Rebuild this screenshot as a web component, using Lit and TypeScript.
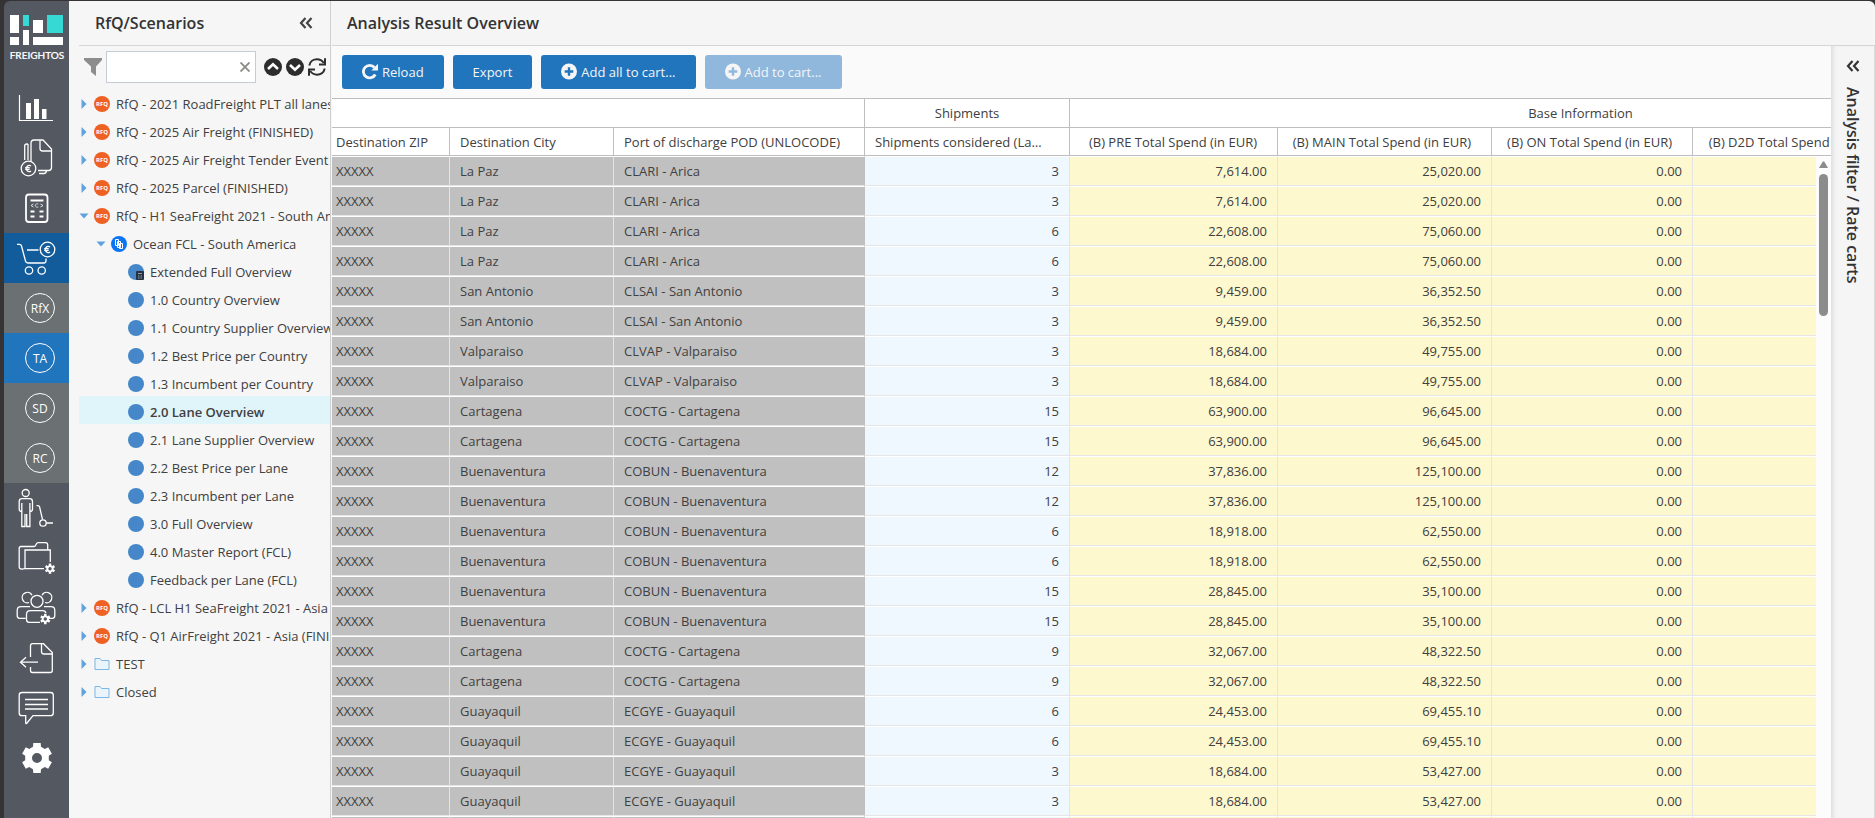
import { LitElement, html, svg, css } from "lit";
import { customElement, property } from "lit/decorators.js";
import { classMap } from "lit/directives/class-map.js";

type NodeKind = "rfq" | "scenario" | "report" | "extended" | "folder";

interface TreeNode {
  label: string;
  kind: NodeKind;
  level: number;
  open?: boolean;
  selected?: boolean;
}

interface Row {
  city: string;
  port: string;
  shipments: number;
  pre: string;
  main: string;
}

const nodes: TreeNode[] = [
  { label: "RfQ - 2021 RoadFreight PLT all lanes", kind: "rfq", level: 0 },
  { label: "RfQ - 2025 Air Freight (FINISHED)", kind: "rfq", level: 0 },
  { label: "RfQ - 2025 Air Freight Tender Event", kind: "rfq", level: 0 },
  { label: "RfQ - 2025 Parcel (FINISHED)", kind: "rfq", level: 0 },
  { label: "RfQ - H1 SeaFreight 2021 - South America", kind: "rfq", level: 0, open: true },
  { label: "Ocean FCL - South America", kind: "scenario", level: 1, open: true },
  { label: "Extended Full Overview", kind: "extended", level: 2 },
  { label: "1.0 Country Overview", kind: "report", level: 2 },
  { label: "1.1 Country Supplier Overview", kind: "report", level: 2 },
  { label: "1.2 Best Price per Country", kind: "report", level: 2 },
  { label: "1.3 Incumbent per Country", kind: "report", level: 2 },
  { label: "2.0 Lane Overview", kind: "report", level: 2, selected: true },
  { label: "2.1 Lane Supplier Overview", kind: "report", level: 2 },
  { label: "2.2 Best Price per Lane", kind: "report", level: 2 },
  { label: "2.3 Incumbent per Lane", kind: "report", level: 2 },
  { label: "3.0 Full Overview", kind: "report", level: 2 },
  { label: "4.0 Master Report (FCL)", kind: "report", level: 2 },
  { label: "Feedback per Lane (FCL)", kind: "report", level: 2 },
  { label: "RfQ - LCL H1 SeaFreight 2021 - Asia", kind: "rfq", level: 0 },
  { label: "RfQ - Q1 AirFreight 2021 - Asia (FINISHED)", kind: "rfq", level: 0 },
  { label: "TEST", kind: "folder", level: 0 },
  { label: "Closed", kind: "folder", level: 0 },
];

// Every lane is quoted by two suppliers, so each entry fills two rows.
const lanes: Row[] = [
  { city: "La Paz", port: "CLARI - Arica", shipments: 3, pre: "7,614.00", main: "25,020.00" },
  { city: "La Paz", port: "CLARI - Arica", shipments: 6, pre: "22,608.00", main: "75,060.00" },
  { city: "San Antonio", port: "CLSAI - San Antonio", shipments: 3, pre: "9,459.00", main: "36,352.50" },
  { city: "Valparaiso", port: "CLVAP - Valparaiso", shipments: 3, pre: "18,684.00", main: "49,755.00" },
  { city: "Cartagena", port: "COCTG - Cartagena", shipments: 15, pre: "63,900.00", main: "96,645.00" },
  { city: "Buenaventura", port: "COBUN - Buenaventura", shipments: 12, pre: "37,836.00", main: "125,100.00" },
  { city: "Buenaventura", port: "COBUN - Buenaventura", shipments: 6, pre: "18,918.00", main: "62,550.00" },
  { city: "Buenaventura", port: "COBUN - Buenaventura", shipments: 15, pre: "28,845.00", main: "35,100.00" },
  { city: "Cartagena", port: "COCTG - Cartagena", shipments: 9, pre: "32,067.00", main: "48,322.50" },
  { city: "Guayaquil", port: "ECGYE - Guayaquil", shipments: 6, pre: "24,453.00", main: "69,455.10" },
  { city: "Guayaquil", port: "ECGYE - Guayaquil", shipments: 3, pre: "18,684.00", main: "53,427.00" },
  { city: "Guayaquil", port: "ECGYE - Guayaquil", shipments: 3, pre: "18,684.00", main: "53,427.00" },
];
const rows: Row[] = lanes.flatMap((lane) => [lane, lane]);

/** Six-toothed cog outline centred on (cx, cy). */
function cog(cx: number, cy: number, outer: number, inner: number, hole: number) {
  const pts: string[] = [];
  for (let i = 0; i < 6; i++) {
    const a = (i * Math.PI) / 3 - Math.PI / 2;
    for (const [d, r] of [[-0.34, inner], [-0.24, outer], [0.24, outer], [0.34, inner]]) {
      pts.push(`${(cx + r * Math.cos(a + d)).toFixed(2)} ${(cy + r * Math.sin(a + d)).toFixed(2)}`);
    }
  }
  return `M${pts.join("L")}ZM${cx - hole} ${cy}a${hole} ${hole} 0 1 0 ${2 * hole} 0a${hole} ${hole} 0 1 0 ${-2 * hole} 0Z`;
}

const euro = (x: number, y: number) =>
  svg`<path stroke-width="1.300" d="M${x + 2.5} ${y - 2.4}a2.900 3 0 1 0 0 4.800M${x - 3.3} ${y - 0.8}h4.500M${x - 3.3} ${y + 0.8}h4.500"/>`;

const railIcons = {
  chart: svg`<path stroke-width="1.2" d="M15.5 12V37.5H49"/><path class="solid" d="M22 20h5v16h-5zM30 16h5v20h-5zM38 26h4.500v10h-4.500z"/>`,
  costs: svg`<path d="M27 28V10.500Q27 7 30 7H39L47.500 16V34.500Q47.500 37.500 44.500 37.500H34M36 7V15.500Q36 18 38.500 18H47.500M24 27V11M20.700 27V13Q20.700 11 23 11H24M35 40.500H40Q42 40.500 42.500 38"/><circle cx="24.500" cy="35.500" r="7.300"/>${euro(24.5, 35.5)}`,
  calc: svg`<rect x="22" y="11.500" width="21.500" height="27.500" rx="3" stroke-width="1.800"/><path stroke-width="1.800" d="M26.500 17.500H39.500M26.500 28.500h4M35.500 28.500h4M26.500 33.500h4M35.500 33.500h4"/><path stroke-width=".8" d="M29.500 21l-2.500 1.500 2.500 1.500M36.500 21l2.500 1.500-2.500 1.500M34.300 21a2 1.700 0 1 0 0 3"/>`,
  cart: svg`<path d="M13 11.300H15.500Q17 11.300 17.500 13L21.500 28Q22 30 24 30H40Q42 30 42 27.500V25.500M23 17H34.500"/><circle cx="25" cy="37.500" r="3.700"/><circle cx="37.700" cy="37.500" r="3.700"/><circle cx="43.500" cy="16.500" r="7.300"/>${euro(43.5, 16.5)}`,
  worker: svg`<circle cx="21.700" cy="10" r="3.500"/><path d="M17.800 28.500Q15.200 28.500 15.200 26V18.500Q15.200 15.700 18 15.700H25.500Q28.500 15.700 28.500 18.500V26Q28.500 28.500 25.900 28.500M17.800 20V43.500H21V31M25.900 20V43.500H22.700V31M32.500 22.700H34Q35.300 22.700 35.600 24L38.500 36.500M42.500 40H49"/><circle cx="39" cy="40" r="3.200"/>`,
  folder: svg`<path d="M21 35.700Q15.200 37 15.200 34V15.500Q15.200 13.500 17 13.500H30Q31.500 13.500 32 11.700T34 9.700H41.500Q43.700 9.700 43.700 12V16.500M40 35.700H21V17H46.300V29"/><path class="solid" fill-rule="evenodd" d="${cog(46, 35.700, 5.300, 3.700, 1.700)}"/>`,
  people: svg`<path d="M25 19.500A5.200 5.200 0 1 1 28 12.200M41 19.500A5.200 5.200 0 1 0 38 12.200M21.500 35.300H15.500Q13.200 35.300 13.200 32.500V27.500Q13.200 23.700 17 23.700H26M44.500 35.300H48.500Q50.800 35.300 50.800 32.500V27.500Q50.800 23.700 47 23.700H40M36 39.300H25Q22.500 39.300 22.500 36.500V31.500Q22.500 27.700 26.500 27.700H38.500Q41.500 27.700 41.800 30"/><circle cx="33" cy="18.300" r="6"/><path class="solid" fill-rule="evenodd" d="${cog(41.300, 36, 5.300, 3.700, 1.700)}"/>`,
  leave: svg`<path d="M26.500 24V13Q26.500 10.700 28.500 10.700H39.500L48.300 19.500V37.500Q48.300 39.500 46.300 39.500H28.500Q26.500 39.500 26.500 37.500V34M37.500 11V18.500Q37.500 21 40 21H48M34 29.200H16.500M22 24.200L16.500 29.200L22 34.200"/>`,
  chat: svg`<path d="M18 9.500H46.500Q49.300 9.500 49.300 12.300V29.900Q49.300 32.700 46.500 32.700H29L23 40Q21.700 41.500 21.700 39.500V32.700H18Q15.200 32.700 15.200 29.900V12.300Q15.200 9.500 18 9.500ZM21 16.500H44M21 21.500H44M21 26H44"/>`,
  gear: svg`<path class="solid" fill-rule="evenodd" d="${cog(33, 25, 15.500, 12, 5)}"/>`,
};

const chevrons = html`<svg width="14" height="12" viewBox="0 0 14 12" fill="none" stroke="currentColor" stroke-width="2.200" aria-hidden="true">
  <path d="M6.500 1L2 6l4.500 5M12.500 1L8 6l4.500 5" /></svg>`;

const plus = html`<svg width="16" height="17" viewBox="0 0 16 17" aria-hidden="true">
  <path fill="currentColor" fill-rule="evenodd" d="M8 .5a8 8 0 1 0 0 16a8 8 0 1 0 0-16ZM6.800 4.200h2.400v3.100h3.100v2.400H9.200v3.100H6.800V9.700H3.700V7.300h3.100Z" /></svg>`;

@customElement("nav-rail")
export class NavRail extends LitElement {
  static styles = css`
    :host { display: block; flex: none; width: 65px; background: #545860; border-top-left-radius: 6px; overflow: hidden; }
    .logo { display: block; height: 82px; }
    .logo text { font: 500 10px "Lato", sans-serif; fill: #fff; stroke: #fff; stroke-width: .2px; }
    nav { display: flex; flex-direction: column; }
    button { display: block; width: 100%; height: 50px; padding: 0; border: 0; background: none; color: #fff; cursor: pointer; }
    .active { background: #135c9c; }
    .sub { background: #6b7072; }
    .current { background: #2175bd; }
    svg { display: block; }
    .icon { fill: none; stroke: #fff; stroke-width: 1.3px; }
    .icon .solid { fill: #fff; stroke-width: 0; }
    .badge { display: flex; align-items: center; justify-content: center; box-sizing: border-box; width: 30px; height: 30px;
      margin-left: 21px; border: 1px solid #fff; border-radius: 50%; font: 12px "Open Sans", sans-serif; }
  `;

  private item(label: string, icon: unknown, active = false) {
    return html`<button class=${classMap({ active })} aria-label=${label}>
      <svg class="icon" width="65" height="50" viewBox="0 0 65 50" aria-hidden="true">${icon}</svg>
    </button>`;
  }

  private sub(text: string, current = false) {
    return html`<button class=${classMap({ sub: !current, current })}><span class="badge">${text}</span></button>`;
  }

  render() {
    return html`
      <svg class="logo" width="65" height="82" viewBox="0 0 65 82">
        <path fill="#fff" d="M6 14h9v18H6zM29 19h10v13H29zM6 36h9v8H6zM19 29h6v15h-6zM29 36h30v8H29z" />
        <path fill="#37d9d5" d="M19 14h6v11h-6zM43 14h16v18H43z" />
        <text x="33" y="58" text-anchor="middle">FREIGHTOS</text>
      </svg>
      <nav>
        ${this.item("Dashboard", railIcons.chart)} ${this.item("Costs", railIcons.costs)} ${this.item("Calculator", railIcons.calc)}
        ${this.item("Procurement", railIcons.cart, true)}
        ${this.sub("RfX")} ${this.sub("TA", true)} ${this.sub("SD")} ${this.sub("RC")}
        ${this.item("Handling", railIcons.worker)} ${this.item("Files", railIcons.folder)} ${this.item("Users", railIcons.people)}
        ${this.item("Leave", railIcons.leave)} ${this.item("Messages", railIcons.chat)} ${this.item("Settings", railIcons.gear)}
      </nav>`;
  }
}

@customElement("scenario-tree")
export class ScenarioTree extends LitElement {
  @property({ attribute: false }) nodes: TreeNode[] = [];

  static styles = css`
    :host { display: block; flex: none; box-sizing: border-box; width: 262px; padding-left: 10px; background: #f6f6f6;
      border-right: 1px solid #d0d0d0; overflow: hidden; color: #404040; font: 13px/24px "Open Sans", sans-serif; }
    button { display: flex; padding: 0; border: 0; background: none; color: #444; cursor: pointer; }
    svg { display: block; flex: none; }
    header { display: flex; align-items: center; justify-content: space-between; height: 44px; padding: 0 17px 0 16px; border-bottom: 1px solid #d5d5d5; }
    h2 { margin: 0; font-size: 16px; font-weight: 600; color: #333; }
    .filter { display: flex; align-items: center; height: 32px; padding: 5px 4px 5px 5px; }
    .field { display: flex; align-items: center; box-sizing: border-box; width: 150px; height: 32px; margin: 0 8px 0 4px; padding-right: 5px;
      border: 1px solid #c5ccd3; background: #fff; }
    input { flex: 1; min-width: 0; height: 28px; padding: 0 6px; border: 0; outline: 0; background: none; font: inherit; }
    .tools { display: flex; gap: 4px; }
    ul { margin: 0; padding: 0; list-style: none; }
    li { box-sizing: border-box; display: flex; align-items: center; height: 28px; padding-top: 4px; white-space: nowrap; }
    .l1 { padding-left: 17px; }
    .l2 { padding-left: 34px; }
    .arrow { width: 15px; }
    .selected { background: #e0f5f9; font-weight: 600; }
    .label { margin-left: 6px; }
    .rfq text { font: 700 6px "Open Sans", sans-serif; fill: #fff; }
  `;

  private icon(kind: NodeKind) {
    switch (kind) {
      case "rfq":
        return svg`<circle cx="8" cy="8" r="8" fill="#ee6123"/><text x="8" y="10.200" text-anchor="middle">RFQ</text>`;
      case "scenario":
        return svg`<circle cx="8" cy="8" r="8" fill="#0a74f5"/><path fill="#0a74f5" stroke="#fff" d="M4.500 3.500h3v6h-3zM6.500 5.500h3v6h-3zM8.500 7.500h3v5h-3z"/>`;
      case "folder":
        return svg`<path fill="#eaf4fc" stroke="#7db7e4" d="M1 13.500v-11h5l1.500 2H15v9Z"/>`;
      case "extended":
        return svg`<circle cx="8" cy="8" r="8" fill="#4587c8"/><rect x="8" y="7" width="8" height="9" rx="1" fill="#263242"/><path stroke="#8fa3b8" d="M10 9.500h4M10 12h1.500M12.500 12H14M10 14h1.500M12.500 14H14"/>`;
      default:
        return svg`<circle cx="8" cy="8" r="8" fill="#4587c8"/>`;
    }
  }

  render() {
    return html`
      <header><h2>RfQ/Scenarios</h2><button aria-label="Collapse panel">${chevrons}</button></header>
      <div class="filter">
        <svg width="18" height="20" viewBox="0 0 18 20" aria-hidden="true"><path fill="#8d8d8d" d="M0 1h18v2l-6 6.500V19l-5-4V9.500L0 3Z" /></svg>
        <span class="field">
          <input type="text" aria-label="Filter scenarios" />
          <button aria-label="Clear filter"><svg width="10" height="10" viewBox="0 0 10 10" stroke="#8b8b84" stroke-width="1.800"><path d="M.5 .5l9 9M9.500 .5l-9 9" /></svg></button>
        </span>
        <span class="tools">
          <button aria-label="Collapse all"><svg width="18" height="18" viewBox="0 0 18 18"><circle cx="9" cy="9" r="9" fill="#2d2d2d" /><path fill="none" stroke="#fff" stroke-width="2.600" d="M4 11l5-4.800L14 11" /></svg></button>
          <button aria-label="Expand all"><svg width="18" height="18" viewBox="0 0 18 18"><circle cx="9" cy="9" r="9" fill="#2d2d2d" /><path fill="none" stroke="#fff" stroke-width="2.600" d="M4 7l5 4.800L14 7" /></svg></button>
          <button aria-label="Refresh"><svg width="18" height="18" viewBox="0 0 18 18"><path fill="none" stroke="#2d2d2d" stroke-width="2" d="M1.300 7.500C2 3.500 5.500 1.300 9 1.300c3 0 5 1.200 6.800 3.700M16.700 10.500c-.7 4-4.200 6.200-7.700 6.200-3 0-5-1.200-6.800-3.700" /><path fill="none" stroke="#2d2d2d" stroke-width="2" d="M17 .3V6.500H11M1 17.700V11.500H7" /></svg></button>
        </span>
      </div>
      <ul role="tree" aria-label="Scenarios">
        ${this.nodes.map(
          (n) => html`<li role="treeitem" class=${classMap({ ["l" + n.level]: true, selected: !!n.selected })} aria-selected=${n.selected ? "true" : "false"}>
            <svg class="arrow" width="15" height="10" viewBox="0 0 15 10" fill="#5ea3e0" aria-hidden="true">
              ${n.level === 2 ? "" : n.open ? svg`<path d="M.500 2.500h9L5 7.500Z"/>` : svg`<path d="M2.500 0v10L7.500 5Z"/>`}
            </svg>
            <svg class=${n.kind} width="16" height="16" viewBox="0 0 16 16" aria-hidden="true">${this.icon(n.kind)}</svg>
            <span class="label">${n.label}</span>
          </li>`,
        )}
      </ul>`;
  }
}

@customElement("result-grid")
export class ResultGrid extends LitElement {
  @property({ attribute: false }) rows: Row[] = [];

  static styles = css`
    :host { display: block; flex: 1; min-width: 0; min-height: 0; position: relative; overflow: hidden; background: #fff; color: #404040; font: 13px/18px "Open Sans", sans-serif; }
    table { width: 1760px; table-layout: fixed; border-collapse: separate; border-spacing: 0; }
    .zip { width: 118px; } .city { width: 164px; } .port { width: 251px; } .ship { width: 205px; }
    .pre { width: 208px; } .main { width: 214px; } .on { width: 201px; } .door { width: 208px; } .rest { width: 191px; }
    th, td { box-sizing: border-box; padding: 0 10px; white-space: nowrap; overflow: hidden; text-overflow: ellipsis; }
    th { height: 28px; border-right: 1px solid #bebebe; border-bottom: 1px solid #bebebe; font-weight: 400; text-align: left; }
    .groups th { border-top: 1px solid #bebebe; text-align: center; height: 30px; }
    .considered { padding-right: 24px; }
    .spend { padding-right: 20px; padding-left: 4px; text-align: right; text-overflow: clip; }
    td { height: 30px; border-top: 1px solid #fff; border-bottom: 1px solid #e6e6e6; border-right: 1px solid #e4e4e4; }
    .key { background: #c0c0c0; background-clip: padding-box; }
    .key:nth-child(3) { border-right-color: #c0c0c0; }
    th:first-child, td:first-child { padding-left: 4px; }
    .count { background: #eff7ff; background-clip: padding-box; }
    .money { background: #fef8cf; background-clip: padding-box; }
    .count, .money { text-align: right; }
    .scroll { position: absolute; top: 59px; right: 0; bottom: 0; width: 15px; background: #fcfcfc; display: flex; flex-direction: column; align-items: center; gap: 6px; padding-top: 4px; box-sizing: border-box; }
    .up { width: 9px; height: 7px; }
    .thumb { width: 9px; height: 142px; border-radius: 5px; background: #8c8c8c; }
  `;

  render() {
    return html`
      <table>
        <colgroup>
          <col class="zip" /><col class="city" /><col class="port" /><col class="ship" /><col class="pre" /><col class="main" /><col class="on" /><col class="door" /><col class="rest" />
        </colgroup>
        <thead>
          <tr class="groups"><th colspan="3"></th><th>Shipments</th><th colspan="5">Base Information</th></tr>
          <tr>
            <th>Destination ZIP</th><th>Destination City</th><th>Port of discharge POD (UNLOCODE)</th><th class="considered">Shipments considered (Lane)</th>
            <th class="spend">(B) PRE Total Spend (in EUR)</th><th class="spend">(B) MAIN Total Spend (in EUR)</th>
            <th class="spend">(B) ON Total Spend (in EUR)</th><th class="spend">(B) D2D Total Spend (in EUR)</th><th></th>
          </tr>
        </thead>
        <tbody>
          ${this.rows.map(
            (r) => html`<tr>
              <td class="key">XXXXX</td><td class="key">${r.city}</td><td class="key">${r.port}</td>
              <td class="count">${r.shipments}</td><td class="money">${r.pre}</td><td class="money">${r.main}</td>
              <td class="money">0.00</td><td class="money"></td><td class="money"></td>
            </tr>`,
          )}
        </tbody>
      </table>
      <div class="scroll" aria-hidden="true">
        <svg class="up" viewBox="0 0 9 7"><path fill="#8c8c8c" d="M3.800 .5h1.400L9 7H0Z" /></svg>
        <div class="thumb"></div>
      </div>`;
  }
}

@customElement("app-root")
export class AppRoot extends LitElement {
  static styles = css`
    :host { display: flex; box-sizing: border-box; height: 100vh; padding: 1px 0 0 4px; overflow: hidden; background: #353333; color: #404040; font: 13px/18px "Open Sans", sans-serif; }
    .page { flex: 1; min-width: 0; display: flex; flex-direction: column; background: #f5f5f5; border-top-right-radius: 6px; }
    header { display: flex; align-items: center; height: 44px; padding-left: 15px; border-bottom: 1px solid #d5d5d5; }
    h1 { margin: 0; font-size: 16px; line-height: 24px; font-weight: 600; color: #333; }
    .body { flex: 1; min-height: 0; display: flex; }
    .results { flex: 1; min-width: 0; display: flex; flex-direction: column; }
    .toolbar { display: flex; gap: 9px; padding: 9px 10px; background: #fafafa; }
    .toolbar button { display: flex; align-items: center; gap: 4px; height: 34px; padding: 0 20px; border: 0; border-radius: 3px; background: #2175bd; color: #f5f5f5; font: inherit; cursor: pointer; }
    .toolbar button:disabled { background: #90b8dd; cursor: default; }
    .toolbar svg { margin-top: -2px; }
    .drawer { display: flex; flex-direction: column; align-items: center; gap: 15px; flex: none; box-sizing: border-box; width: 44px; padding-top: 14px;
      background: #f5f5f5; border-right: 1px solid #dcdcdc; box-shadow: inset 5px 0 4px -3px #d8dbdc; color: #333; }
    .drawer button { display: flex; padding: 0; border: 0; background: none; color: inherit; cursor: pointer; }
    .drawer h2 { margin: 0; writing-mode: vertical-rl; font-size: 16px; line-height: 24px; font-weight: 600; }
    .split { display: flex; flex: none; padding-right: 1px; background: #f6f6f6; }
  `;

  render() {
    return html`
      <nav-rail></nav-rail>
      <div class="split"><scenario-tree .nodes=${nodes}></scenario-tree></div>
      <main class="page">
        <header><h1>Analysis Result Overview</h1></header>
        <div class="body">
          <section class="results">
            <div class="toolbar">
              <button>
                <svg width="16" height="17" viewBox="0 0 16 17" aria-hidden="true"><path fill="none" stroke="currentColor" stroke-width="2.800" d="M13.300 11.500A6.300 6.300 0 1 1 12.500 4.500" /><path fill="currentColor" d="M16 .8V7.500H9.300Z" /></svg>Reload
              </button>
              <button>Export</button>
              <button>${plus}Add all to cart...</button>
              <button disabled>${plus}Add to cart...</button>
            </div>
            <result-grid .rows=${rows}></result-grid>
          </section>
          <aside class="drawer">
            <button aria-label="Expand filter panel">${chevrons}</button>
            <h2>Analysis filter / Rate carts</h2>
          </aside>
        </div>
      </main>`;
  }
}
